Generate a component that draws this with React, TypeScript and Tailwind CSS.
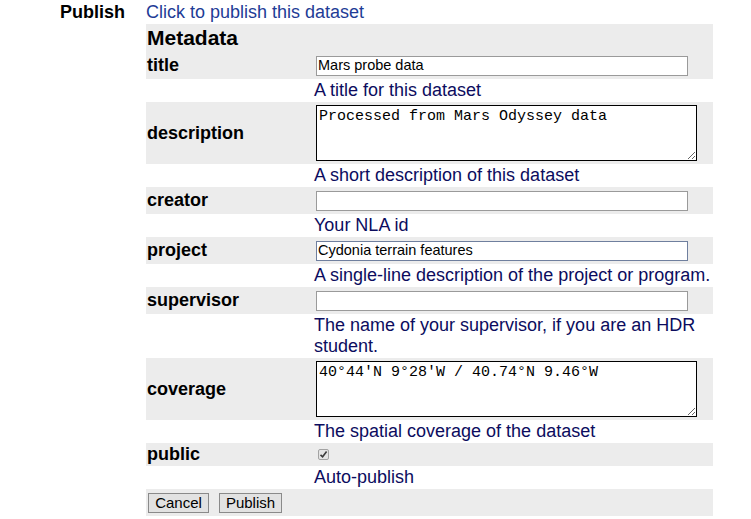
import React from 'react';

type Field = {
  name: string;
  kind: 'input' | 'textarea' | 'checkbox';
  value?: string;
  help: React.ReactNode;
  focused?: boolean;
};

const fields: Field[] = [
  { name: 'title', kind: 'input', value: 'Mars probe data', help: 'A title for this dataset' },
  {
    name: 'description',
    kind: 'textarea',
    value: 'Processed from Mars Odyssey data',
    help: 'A short description of this dataset',
  },
  { name: 'creator', kind: 'input', value: '', help: 'Your NLA id' },
  {
    name: 'project',
    kind: 'input',
    value: 'Cydonia terrain features',
    help: 'A single-line description of the project or program.',
    focused: true,
  },
  {
    name: 'supervisor',
    kind: 'input',
    value: '',
    help: 'The name of your supervisor, if you are an HDR student.',
  },
  {
    name: 'coverage',
    kind: 'textarea',
    value: '40°44′N 9°28′W / 40.74°N 9.46°W',
    help: 'The spatial coverage of the dataset',
  },
  { name: 'public', kind: 'checkbox', help: 'Auto-publish' },
];

const Control = ({ field }: { field: Field }) => {
  if (field.kind === 'textarea') {
    return (
      <textarea
        defaultValue={field.value}
        spellCheck={false}
        className="ml-[2px] block w-[381px] h-[56px] border border-black bg-white px-[2px] py-[2px] font-['Liberation_Mono',monospace] text-[15px] leading-[17px] text-black outline-none"
      />
    );
  }
  if (field.kind === 'checkbox') {
    return (
      <span className="ml-[4px] flex h-[11px] w-[11px] items-center justify-center rounded-[2px] border border-[#a3a3a3] bg-[#e4e4e4]">
        <svg width="9" height="9" viewBox="0 0 9 9">
          <path d="M1.5 4.8 L3.6 6.8 L7.6 1.6" fill="none" stroke="#3a3a3a" strokeWidth="1.6" />
        </svg>
      </span>
    );
  }
  return (
    <input
      type="text"
      defaultValue={field.value}
      spellCheck={false}
      className={`ml-[2px] block w-[372px] h-[20px] border bg-white px-[1px] font-['Liberation_Sans',Arial,sans-serif] text-[14.5px] text-black outline-none ${
        field.focused ? 'border-[#6f7f9e]' : 'border-[#9a9a9a]'
      }`}
    />
  );
};

export default function App() {
  return (
    <div className="min-h-screen bg-white font-['Liberation_Sans',Arial,sans-serif] text-[18px] text-black">
      <div className="flex">
        {/* Left heading column */}
        <div className="w-[146px] shrink-0 pr-[21px] text-right font-bold leading-[24px]">Publish</div>

        <div className="w-[567px]">
          <a href="#" className="block leading-[24px] text-[#1e3c96]">
            Click to publish this dataset
          </a>

          {/* Metadata form */}
          <div className="bg-[#ececec] pl-[1px] py-[1px] text-[21px] font-bold leading-[26px]">Metadata</div>

          {fields.map((f) => (
            <div key={f.name}>
              <div
                className={`flex items-center bg-[#ececec] ${
                  f.kind === 'checkbox' ? 'py-[1px]' : f.kind === 'textarea' ? 'py-[3px]' : 'py-[3px]'
                }`}
              >
                <div className="w-[168px] shrink-0 pl-[1px] font-bold leading-[21px]">{f.name}</div>
                <div className="flex-1">
                  <Control field={f} />
                </div>
              </div>
              <div className="flex py-[1px]">
                <div className="w-[168px] shrink-0" />
                <div className="flex-1 leading-[21px] text-[#0c0c5e]">{f.help}</div>
              </div>
            </div>
          ))}

          <div className="flex gap-[10px] bg-[#ececec] pl-[2px] pt-[4px] pb-[3px]">
            <button className="h-[20px] w-[61px] border border-[#8a8a8a] bg-[#e2e2e2] text-[15px] leading-[18px] text-black">
              Cancel
            </button>
            <button className="h-[20px] w-[63px] border border-[#8a8a8a] bg-[#e2e2e2] text-[15px] leading-[18px] text-black">
              Publish
            </button>
          </div>
        </div>
      </div>
    </div>
  );
}
